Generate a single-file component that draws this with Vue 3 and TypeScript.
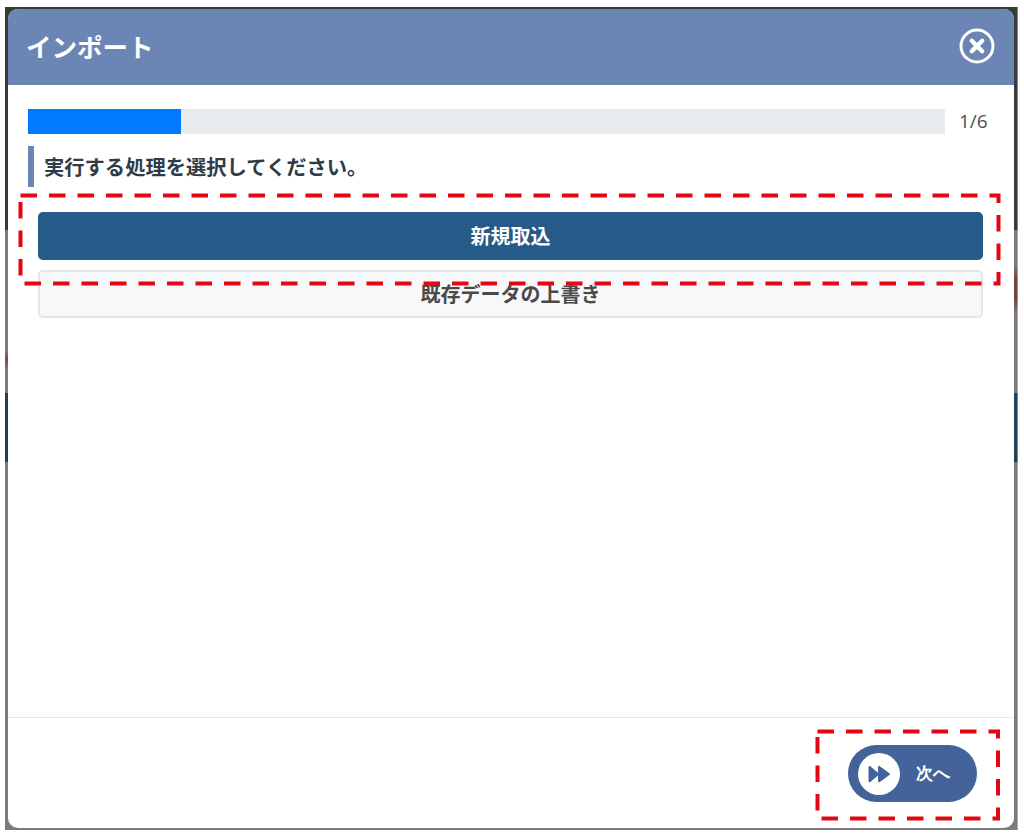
<script setup lang="ts">
const progress = { current: 1, total: 6 }
const percent = (progress.current / progress.total) * 100
</script>

<template>
  <div class="screen">
    <div class="backdrop">
      <section class="modal">
        <header class="modal-header">
          <h1 class="modal-title">インポート</h1>
          <button class="close" aria-label="閉じる">
            <svg width="36" height="36" viewBox="0 0 36 36" fill="none">
              <circle cx="18" cy="18" r="16" stroke="#fff" stroke-width="3" />
              <path d="M12.800 12.800 23.200 23.200M23.200 12.800 12.800 23.200" stroke="#fff" stroke-width="4.400" stroke-linecap="round" />
            </svg>
          </button>
        </header>
        <div class="modal-body">
          <div class="progress-row">
            <div class="progress"><div class="progress-bar" :style="{ width: percent + '%' }"></div></div>
            <span class="progress-label">{{ progress.current }}/{{ progress.total }}</span>
          </div>
          <h2 class="section-title">実行する処理を選択してください。</h2>
          <div class="choices">
            <button class="choice active">新規取込</button>
            <button class="choice">既存データの上書き</button>
          </div>
        </div>
        <footer class="modal-footer">
          <button class="next">
            <span class="next-icon">
              <svg width="24" height="18" viewBox="0 0 24 18">
                <path d="M1.500 2.200c0-1 1-1.500 1.800-1L11 7.800V2.200c0-1 1-1.500 1.800-1l9.600 7c.7.500.7 1.300 0 1.800l-9.600 7c-.8.500-1.800 0-1.800-1v-5.600l-7.700 6.600c-.8.500-1.800 0-1.800-1z" fill="#43639a" />
              </svg>
            </span>
            <span class="next-label">次へ</span>
          </button>
        </footer>
      </section>
    </div>

    <svg class="callout" width="1024" height="836" viewBox="0 0 1024 836" fill="none">
      <rect x="20.500" y="195.500" width="978" height="88" stroke="#e30613" stroke-width="4" stroke-dasharray="16.500 12" />
      <rect x="817.500" y="731.500" width="180.500" height="87" stroke="#e30613" stroke-width="4" stroke-dasharray="16.500 12" />
    </svg>
  </div>
</template>

<style>
html,
body {
  margin: 0;
  background: #fff;
}
</style>

<style scoped>
.screen {
  position: relative;
  width: 1024px;
  height: 836px;
  box-sizing: border-box;
  padding: 7px 6px 6px 5px;
  background: #fff;
  font-family: "Noto Sans CJK JP", "Noto Sans", sans-serif;
}

.backdrop {
  height: 100%;
  box-sizing: border-box;
  padding: 2px 4px 2px 2.500px;
  background-repeat: no-repeat;
  background-size: 50% 100%, 51% 100%;
  background-position: left top, right top;
  background-image:
    linear-gradient(
      to bottom,
      #3a3a3a 0,
      #3a3a3a 223px,
      #7b7b7b 223px,
      #7b7b7b 343px,
      #75504a 352px,
      #7b7b7b 363px,
      #7b7b7b 386px,
      #1f4057 386px,
      #1f4057 455px,
      #7b7b7b 455px,
      #7b7b7b 100%
    ),
    linear-gradient(
      to bottom,
      #3a3a3a 0,
      #3a3a3a 223px,
      #7b7b7b 223px,
      #7b7b7b 258px,
      #75453c 272px,
      #75453c 292px,
      #7b7b7b 306px,
      #7b7b7b 386px,
      #1f4057 386px,
      #1f4057 455px,
      #7b7b7b 455px,
      #7b7b7b 100%
    );
}

.modal {
  height: 100%;
  display: flex;
  flex-direction: column;
  background: #fff;
  border-radius: 10px;
  overflow: hidden;
}

.modal-header {
  flex: none;
  height: 76px;
  box-sizing: border-box;
  display: flex;
  align-items: center;
  justify-content: space-between;
  padding: 0 19px 2px 18.500px;
  background: #6b86b5;
  color: #fff;
}

.modal-title {
  margin: 0;
  font-size: 25.500px;
  font-weight: 700;
  line-height: 1;
}

.close {
  display: flex;
  width: 36px;
  height: 36px;
  padding: 0;
  border: 0;
  background: none;
}

.modal-body {
  flex: 1;
  padding: 24px 27px 0 20.500px;
}

.progress-row {
  display: flex;
  align-items: center;
  gap: 14px;
}

.progress {
  flex: 1;
  height: 25px;
  background: #e9ecef;
}

.progress-bar {
  height: 100%;
  background: #007bff;
}

.progress-label {
  width: 28px;
  font-family: "Open Sans", "Noto Sans", sans-serif;
  font-size: 19px;
  line-height: 25px;
  color: #495057;
}

.section-title {
  margin: 12px 0 0;
  padding-left: 10px;
  height: 41px;
  border-left: 6px solid #6b86b5;
  font-size: 20.300px;
  font-weight: 700;
  line-height: 41px;
  color: #2f3b47;
}

.choices {
  display: flex;
  flex-direction: column;
  gap: 10px;
  margin: 25px 4px 0 10px;
}

.choice {
  height: 48px;
  padding: 0 0 2px;
  border: 2px solid #e4e6e9;
  border-radius: 5px;
  background: #f7f8fa;
  font-family: inherit;
  font-size: 20px;
  font-weight: 700;
  color: #4a4a4a;
}

.choice.active {
  border-color: #265a88;
  background: #265a88;
  color: #fff;
}

.modal-footer {
  flex: none;
  height: 111px;
  box-sizing: border-box;
  display: flex;
  justify-content: flex-end;
  padding: 27px 37px 0 0;
  border-top: 1px solid #e9e9e9;
}

.next {
  display: flex;
  align-items: center;
  width: 129px;
  height: 57px;
  box-sizing: border-box;
  padding: 0 0 0 10px;
  border: 0;
  border-radius: 29px;
  background: #43639a;
  color: #fff;
}

.next-icon {
  display: flex;
  align-items: center;
  justify-content: center;
  width: 42px;
  height: 42px;
  border-radius: 50%;
  background: #fff;
}

.next-label {
  margin-left: 16px;
  font-family: inherit;
  font-size: 17px;
  font-weight: 700;
}

.callout {
  position: absolute;
  top: 0;
  left: 0;
  pointer-events: none;
}
</style>
